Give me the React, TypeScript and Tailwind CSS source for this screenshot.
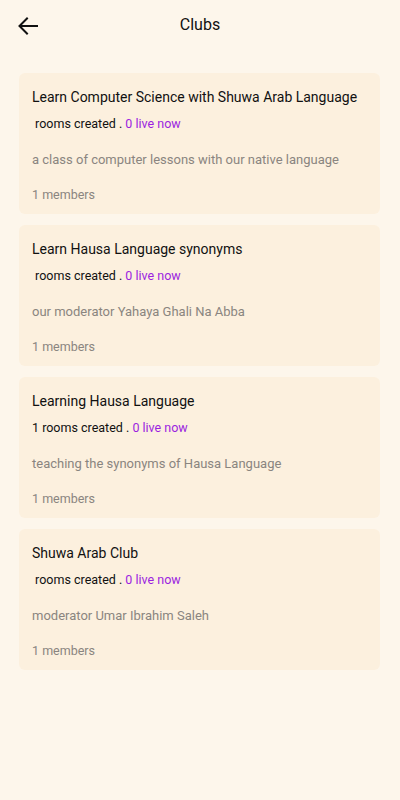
import React from 'react';

interface Club {
  name: string;
  rooms: string;
  description: string;
  members: number;
}

const clubs: Club[] = [
  {
    name: 'Learn Computer Science with Shuwa Arab Language',
    rooms: '',
    description: 'a class of computer lessons with our native language',
    members: 1,
  },
  {
    name: 'Learn Hausa Language synonyms',
    rooms: '',
    description: 'our moderator Yahaya Ghali Na Abba',
    members: 1,
  },
  {
    name: 'Learning Hausa Language',
    rooms: '1',
    description: 'teaching the synonyms of Hausa Language',
    members: 1,
  },
  {
    name: 'Shuwa Arab Club',
    rooms: '',
    description: 'moderator Umar Ibrahim Saleh',
    members: 1,
  },
];

const ClubCard: React.FC<{ club: Club }> = ({ club }) => (
  <div className="bg-[#fcf0de] rounded-md h-[141px] px-[13px] pt-[14px]">
    <div className="text-[14px] leading-5 text-[#111] whitespace-nowrap">{club.name}</div>
    <div className="text-[12.5px] leading-4 mt-[9px] whitespace-pre text-[#111]">
      {club.rooms} rooms created . <span className="text-[#9b1fe0]">0 live now</span>
    </div>
    <div className="text-[13px] leading-5 mt-[18px] text-[#8a8580] whitespace-nowrap">{club.description}</div>
    <div className="text-[12.5px] leading-5 mt-[15px] text-[#8a8580]">{club.members} members</div>
  </div>
);

export default function App() {
  return (
    <div className="w-[400px] h-[800px] bg-[#fdf6eb]" style={{ fontFamily: 'Roboto, "Liberation Sans", sans-serif' }}>
      <div className="relative h-[50px] flex items-center justify-center">
        <button className="absolute left-[16px] top-[14px] text-[#111]">
          <svg width="24" height="24" viewBox="0 0 24 24" fill="none" stroke="currentColor" strokeWidth="2" strokeLinecap="square">
            <path d="M21 12H4" />
            <path d="M11 4.5L3.5 12L11 19.5" />
          </svg>
        </button>
        <h1 className="text-[16px] text-[#111]">Clubs</h1>
      </div>
      <div className="flex flex-col gap-[11px] px-[19px] mt-[23px] pr-[20px]">
        {clubs.map((c) => (
          <ClubCard key={c.name} club={c} />
        ))}
      </div>
    </div>
  );
}
